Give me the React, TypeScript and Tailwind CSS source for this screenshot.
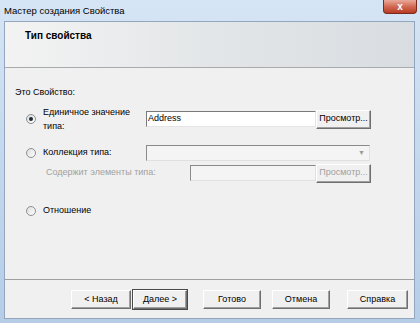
import type { ReactNode } from 'react'

function Radio({ checked }: { checked?: boolean }) {
  return (
    <span className="w-[10px] h-[10px] rounded-full border border-[#8c8f94] bg-gradient-to-br from-[#dcdcdc] to-[#ffffff] flex items-center justify-center shrink-0">
      {checked && <span className="w-[4px] h-[4px] rounded-full bg-[#1f2a33]" />}
    </span>
  )
}

function Btn({ children, w, primary, disabled }: { children: ReactNode; w: string; primary?: boolean; disabled?: boolean }) {
  return (
    <div
      className={`${w} h-[19px] flex items-center justify-center text-[9px] bg-[#f0f0f0] border-t border-l border-t-white border-l-white border-r border-b border-r-[#6f6f6f] border-b-[#6f6f6f] shadow-[inset_-1px_-1px_0_#a0a0a0]
        ${primary ? 'outline outline-1 outline-[#4a4a4a]' : ''} ${disabled ? 'text-[#a0a0a0]' : 'text-black'}`}
    >
      {children}
    </div>
  )
}

export default function App() {
  return (
    <div className="w-[420px] h-[323px] flex flex-col bg-gradient-to-b from-[#d6e5f5] via-[#c3d8ee] to-[#b6cde8] font-['Liberation_Sans',Arial,sans-serif] text-black overflow-hidden">
      {/* title bar */}
      <div className="h-[21px] flex items-start justify-between pl-[4px] pr-[3px] shrink-0">
        <div className="text-[9.5px] leading-[21px]">Мастер создания Свойства</div>
        <div className="w-[34px] h-[14px] rounded-b-[4px] border border-t-0 border-[#7a2a1e] bg-gradient-to-b from-[#e9a99a] via-[#d26a53] to-[#b83a22] flex items-center justify-center">
          <span className="text-white text-[10px] font-bold leading-none">x</span>
        </div>
      </div>

      <div className="flex-1 flex pl-[4px] pr-[5px] pb-[4px]">
        <div className="flex-1 flex flex-col bg-[#f0f0f0] border border-[#93a6bd]">
          {/* header */}
          <div className="h-[46px] shrink-0 border-b border-[#a9aaab] bg-gradient-to-r from-[#f3f3f3] via-[#e3e6e8] to-[#d8dde1] pl-[20px] pt-[7px]">
            <div className="text-[10px] leading-[14px] font-bold">Тип свойства</div>
          </div>

          {/* content */}
          <div className="flex-1 flex flex-col pl-[10px] text-[9px]">
            <div className="mt-[19px] leading-[11px]">Это Свойство:</div>

            <div className="mt-[7px] h-[28px] flex items-center">
              <div className="w-[28px] flex justify-end pr-[7px]">
                <Radio checked />
              </div>
              <div className="w-[103px] leading-[14px]">
                <div>Единичное значение</div>
                <div>типа:</div>
              </div>
              <div className="w-[170px] h-[16px] bg-white border border-t-[#7a7a7a] border-l-[#7a7a7a] border-r-[#e5e5e5] border-b-[#e5e5e5] flex items-center pl-[1px] text-[9px]">
                Address
              </div>
              <Btn w="w-[55px]">Просмотр...</Btn>
            </div>

            <div className="mt-[12px] h-[16px] flex items-center">
              <div className="w-[28px] flex justify-end pr-[7px]">
                <Radio />
              </div>
              <div className="w-[103px]">Коллекция типа:</div>
              <div className="w-[224px] h-[16px] bg-[#f4f4f4] border border-t-[#8a8a8a] border-l-[#8a8a8a] border-r-[#e0e0e0] border-b-[#e0e0e0] flex items-center justify-end pr-[4px]">
                <span className="text-[7px] text-[#9a9a9a]">▼</span>
              </div>
            </div>

            <div className="mt-[4px] h-[16px] flex items-center">
              <div className="w-[175px] pl-[31px] text-[#a0a0a0]">Содержит элементы типа:</div>
              <div className="w-[126px] h-[16px] bg-[#f4f4f4] border border-t-[#8a8a8a] border-l-[#8a8a8a] border-r-[#e0e0e0] border-b-[#e0e0e0]" />
              <Btn w="w-[55px]" disabled>Просмотр...</Btn>
            </div>

            <div className="mt-[24px] h-[12px] flex items-center">
              <div className="w-[28px] flex justify-end pr-[7px]">
                <Radio />
              </div>
              <div>Отношение</div>
            </div>
          </div>

          {/* footer */}
          <div className="h-[39px] shrink-0 border-t border-[#a0a0a0] flex items-start pt-[10px] pl-[66px]">
            <Btn w="w-[60px]">&lt; Назад</Btn>
            <div className="ml-[2px]">
              <Btn w="w-[54px]" primary>Далее &gt;</Btn>
            </div>
            <div className="ml-[16px]">
              <Btn w="w-[58px]">Готово</Btn>
            </div>
            <div className="ml-[11px]">
              <Btn w="w-[58px]">Отмена</Btn>
            </div>
            <div className="ml-[17px]">
              <Btn w="w-[61px]">Справка</Btn>
            </div>
          </div>
        </div>
      </div>
    </div>
  )
}
